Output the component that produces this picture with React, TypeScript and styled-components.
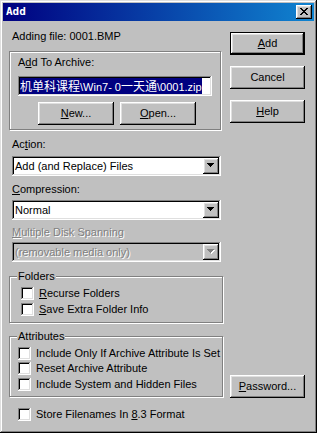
import React from "react";
import styled, { createGlobalStyle, css } from "styled-components";

const GlobalStyle = createGlobalStyle`
  html, body { margin: 0; padding: 0; background: #c0c0c0; }
  body { font-family: "Liberation Sans", Arial, sans-serif; font-size: 11px; }
  * { box-sizing: border-box; }
`;

const raised = css`
  box-shadow: inset -1px -1px 0 #000, inset 1px 1px 0 #fff,
    inset -2px -2px 0 #808080, inset 2px 2px 0 #dfdfdf;
`;

const sunken = css`
  box-shadow: inset -1px -1px 0 #fff, inset 1px 1px 0 #808080,
    inset -2px -2px 0 #dfdfdf, inset 2px 2px 0 #000;
`;

const Window = styled.div`
  width: 317px;
  height: 433px;
  padding: 3px;
  background: #c0c0c0;
  box-shadow: inset -1px -1px 0 #000, inset 1px 1px 0 #dfdfdf,
    inset -2px -2px 0 #808080, inset 2px 2px 0 #fff;
  display: flex;
  flex-direction: column;
  font-family: "Liberation Sans", Arial, sans-serif;
  font-size: 11px;
  line-height: 13px;
  color: #000;
`;

const TitleBar = styled.div`
  height: 18px;
  display: flex;
  align-items: center;
  justify-content: space-between;
  padding: 0 2px 0 2px;
  background: linear-gradient(90deg, #000080 0%, #1084d0 100%);
`;

const TitleText = styled.span`
  color: #fff;
  font-family: "DejaVu Sans Mono", "Liberation Mono", monospace;
  font-weight: bold;
  font-size: 11px;
  line-height: 18px;
  margin-left: 1px;
`;

const CloseButton = styled.div`
  width: 16px;
  height: 14px;
  background: #c0c0c0;
  ${raised};
  display: flex;
  align-items: flex-start;
  padding: 3px 0 0 4px;
`;

const Body = styled.div`
  flex: 1;
  display: flex;
  gap: 7px;
  padding: 9px 9px 10px 6px;
`;

const LeftColumn = styled.div`
  width: 214px;
  display: flex;
  flex-direction: column;
`;

const RightColumn = styled.div`
  width: 75px;
  display: flex;
  flex-direction: column;
  gap: 11px;
  padding-top: 2px;
`;

const InfoText = styled.div`
  margin-left: 3px;
  white-space: nowrap;
`;

const ArchiveBox = styled.div`
  width: 212px;
  margin-top: 8px;
  border: 1px solid #808080;
  box-shadow: inset 1px 1px 0 #fff, 1px 1px 0 #fff;
  padding: 4px 0 4px 8px;
  display: flex;
  flex-direction: column;
`;

const PlainLabel = styled.div<{ $mt?: number; $ml?: number; $disabled?: boolean }>`
  margin-top: ${(p) => p.$mt ?? 0}px;
  margin-left: ${(p) => p.$ml ?? 0}px;
  white-space: nowrap;
  ${(p) =>
    p.$disabled &&
    css`
      color: #808080;
      text-shadow: 1px 1px 0 #fff;
    `}
`;

const Key = styled.span`
  text-decoration: underline;
  text-underline-offset: 1px;
`;

const TextField = styled.div`
  width: 194px;
  height: 20px;
  margin-top: 7px;
  background: #fff;
  ${sunken};
  display: flex;
  align-items: center;
  padding-left: 2px;
  overflow: hidden;
`;

const Selection = styled.span`
  background: #000080;
  color: #fff;
  height: 16px;
  line-height: 16px;
  white-space: nowrap;
  font-family: "Liberation Sans", "Noto Sans CJK SC", sans-serif;
  font-size: 11px;
`;

const Cjk = styled.span`
  font-family: "Noto Sans CJK SC", sans-serif;
  font-size: 12px;
`;

const ButtonRow = styled.div`
  display: flex;
  gap: 6px;
  margin-top: 6px;
  padding-left: 20px;
`;

const PushButton = styled.div<{ $w?: number; $default?: boolean; $mtAuto?: boolean }>`
  width: ${(p) => p.$w ?? 75}px;
  height: 23px;
  background: #c0c0c0;
  display: flex;
  align-items: center;
  justify-content: center;
  white-space: nowrap;
  ${(p) =>
    p.$default
      ? css`
          border: 1px solid #000;
          box-shadow: inset -1px -1px 0 #000, inset 1px 1px 0 #fff,
            inset -2px -2px 0 #808080, inset 2px 2px 0 #dfdfdf;
        `
      : raised};
  ${(p) =>
    p.$mtAuto &&
    css`
      margin-top: auto;
      margin-bottom: 23px;
    `}
`;

const Combo = styled.div<{ $mt: number; $disabled?: boolean }>`
  width: 209px;
  height: 20px;
  margin-left: 3px;
  margin-top: ${(p) => p.$mt}px;
  background: ${(p) => (p.$disabled ? "#c0c0c0" : "#fff")};
  ${sunken};
  display: flex;
  align-items: center;
  padding: 2px;
  color: ${(p) => (p.$disabled ? "#808080" : "#000")};
  ${(p) => p.$disabled && css`text-shadow: 1px 1px 0 #fff;`}
`;

const ComboText = styled.span`
  flex: 1;
  padding-left: 1px;
  white-space: nowrap;
`;

const DropButton = styled.div`
  width: 16px;
  height: 16px;
  background: #c0c0c0;
  ${raised};
  display: flex;
  align-items: center;
  justify-content: center;
  padding-bottom: 1px;
`;

const GroupBox = styled.div<{ $mt: number; $pb: number }>`
  width: 214px;
  margin-top: ${(p) => p.$mt}px;
  border: 1px solid #808080;
  box-shadow: inset 1px 1px 0 #fff, 1px 1px 0 #fff;
  padding: 0 0 ${(p) => p.$pb}px 6px;
  display: flex;
  flex-direction: column;
  align-items: flex-start;
`;

const GroupCaption = styled.span`
  margin-top: -7px;
  margin-left: 1px;
  padding: 0 1px;
  background: #c0c0c0;
  white-space: nowrap;
`;

const CheckRow = styled.div<{ $mt: number; $indent: number }>`
  display: flex;
  align-items: center;
  gap: 5px;
  height: 13px;
  margin-top: ${(p) => p.$mt}px;
  margin-left: ${(p) => p.$indent}px;
  white-space: nowrap;
`;

const CheckBox = styled.span`
  width: 13px;
  height: 13px;
  flex: none;
  background: #fff;
  ${sunken};
`;

const CloseGlyph = () => (
  <svg width="8" height="7" viewBox="0 0 8 7" shapeRendering="crispEdges">
    <path
      fill="#000"
      d="M0 0h2v1H0zM6 0h2v1H6zM1 1h2v1H1zM5 1h2v1H5zM2 2h4v1H2zM3 3h2v1H3zM2 4h4v1H2zM1 5h2v1H1zM5 5h2v1H5zM0 6h2v1H0zM6 6h2v1H6z"
    />
  </svg>
);

const ARROW = "M0 0h7v1H0zM1 1h5v1H1zM2 2h3v1H2zM3 3h1v1H3z";

const DownArrow = ({ disabled }: { disabled?: boolean }) => (
  <svg width="8" height="5" viewBox="0 0 8 5" shapeRendering="crispEdges">
    {disabled && <path fill="#fff" d={ARROW} transform="translate(1 1)" />}
    <path fill={disabled ? "#808080" : "#000"} d={ARROW} />
  </svg>
);

const Check = ({ children, mt, indent }: { children: React.ReactNode; mt: number; indent: number }) => (
  <CheckRow $mt={mt} $indent={indent}>
    <CheckBox />
    <span>{children}</span>
  </CheckRow>
);

export default function App() {
  return (
    <>
      <GlobalStyle />
      <Window>
        <TitleBar>
          <TitleText>Add</TitleText>
          <CloseButton>
            <CloseGlyph />
          </CloseButton>
        </TitleBar>
        <Body>
          <LeftColumn>
            <InfoText>Adding file: 0001.BMP</InfoText>
            <ArchiveBox>
              <PlainLabel>
                A<Key>d</Key>d To Archive:
              </PlainLabel>
              <TextField>
                <Selection>
                  <Cjk>机单科课程</Cjk>\Win7- 0<Cjk>一天通</Cjk>\0001.zip
                </Selection>
              </TextField>
              <ButtonRow>
                <PushButton $w={76}>
                  <Key>N</Key>ew...
                </PushButton>
                <PushButton $w={76}>
                  <Key>O</Key>pen...
                </PushButton>
              </ButtonRow>
            </ArchiveBox>

            <PlainLabel $mt={8} $ml={3}>
              Ac<Key>t</Key>ion:
            </PlainLabel>
            <Combo $mt={5}>
              <ComboText>Add (and Replace) Files</ComboText>
              <DropButton>
                <DownArrow />
              </DropButton>
            </Combo>

            <PlainLabel $mt={7} $ml={3}>
              <Key>C</Key>ompression:
            </PlainLabel>
            <Combo $mt={4}>
              <ComboText>Normal</ComboText>
              <DropButton>
                <DownArrow />
              </DropButton>
            </Combo>

            <PlainLabel $mt={6} $ml={3} $disabled>
              <Key>M</Key>ultiple Disk Spanning
            </PlainLabel>
            <Combo $mt={3} $disabled>
              <ComboText>(removable media only)</ComboText>
              <DropButton>
                <DownArrow disabled />
              </DropButton>
            </Combo>

            <GroupBox $mt={14} $pb={6}>
              <GroupCaption>Folders</GroupCaption>
              <Check mt={4} indent={5}>
                <Key>R</Key>ecurse Folders
              </Check>
              <Check mt={3} indent={5}>
                <Key>S</Key>ave Extra Folder Info
              </Check>
            </GroupBox>

            <GroupBox $mt={13} $pb={5}>
              <GroupCaption>Attributes</GroupCaption>
              <Check mt={4} indent={2}>
                Include Only If Archive Attribute Is Set
              </Check>
              <Check mt={2} indent={2}>
                Reset Archive Attribute
              </Check>
              <Check mt={3} indent={2}>
                Include System and Hidden Files
              </Check>
            </GroupBox>

            <Check mt={11} indent={9}>
              Store Filenames In <Key>8</Key>.3 Format
            </Check>
          </LeftColumn>

          <RightColumn>
            <PushButton $default>
              <Key>A</Key>dd
            </PushButton>
            <PushButton>Cancel</PushButton>
            <PushButton>
              <Key>H</Key>elp
            </PushButton>
            <PushButton $mtAuto>
              <Key>P</Key>assword...
            </PushButton>
          </RightColumn>
        </Body>
      </Window>
    </>
  );
}
